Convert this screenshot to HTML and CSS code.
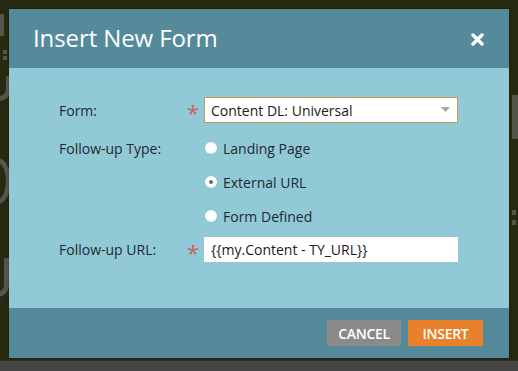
FILE: index.html
```html
<!DOCTYPE html>
<html>
<head>
<meta charset="utf-8">
<link rel="stylesheet" href="styles.css">
</head>
<body>
<div class="page">
  <div class="backdrop">
    <div class="frag frag-a"></div>
    <div class="frag frag-b"></div>
    <div class="frag frag-c"></div>
    <div class="frag frag-d"></div>
    <div class="frag frag-e"></div>
    <div class="frag frag-f"></div>
    <div class="frag frag-g"></div>
  </div>
  <div class="bottom-strip"></div>
</div>
<div class="dialog">
  <div class="dialog-header">
    <h1 class="title">Insert New Form</h1>
    <svg class="close" width="13" height="13" viewBox="0 0 13 13"><path d="M2 2 L11 11 M11 2 L2 11" stroke="#fff" stroke-width="3.4" stroke-linecap="round"/></svg>
  </div>
  <div class="dialog-body">
    <div class="row row-select">
      <span class="label">Form:</span>
      <span class="req">*</span>
      <div class="select">
        <span>Content DL: Universal</span>
        <svg width="9" height="5" viewBox="0 0 9 5"><path d="M0 0 H9 L4.5 5 Z" fill="#a8a8a8"/></svg>
      </div>
    </div>
    <div class="row row-radio">
      <span class="label">Follow-up Type:</span>
      <span class="req"></span>
      <label class="radio"><span class="dot"></span>Landing Page</label>
    </div>
    <div class="row row-radio">
      <span class="label"></span>
      <span class="req"></span>
      <label class="radio"><span class="dot checked"></span>External URL</label>
    </div>
    <div class="row row-radio">
      <span class="label"></span>
      <span class="req"></span>
      <label class="radio"><span class="dot"></span>Form Defined</label>
    </div>
    <div class="row row-input">
      <span class="label">Follow-up URL:</span>
      <span class="req">*</span>
      <div class="input">{{my.Content - TY_URL}}</div>
    </div>
  </div>
  <div class="dialog-footer">
    <button class="btn btn-cancel">CANCEL</button>
    <button class="btn btn-insert">INSERT</button>
  </div>
</div>
</body>
</html>
```

FILE: styles.css
```css
html, body {
  margin: 0;
  padding: 0;
}
body {
  width: 518px;
  height: 371px;
  overflow: hidden;
  background: #262a10;
  font-family: "Open Sans", "Liberation Sans", sans-serif;
}
.page {
  height: 371px;
  display: flex;
  flex-direction: column;
}
.backdrop {
  flex: 1;
  position: relative;
  overflow: hidden;
}
.frag {
  position: absolute;
  background: #55554b;
}
.frag-a { left: 0; top: 14px; width: 4px; height: 22px; }
.frag-b { left: 3px; top: 50px; width: 4px; height: 4px; box-shadow: 0 6px 0 #55554b; }
.frag-c { left: -14px; top: 76px; width: 20px; height: 20px; background: transparent; border: 5px solid #55554b; border-radius: 0 0 12px 0; border-left: none; border-top: none; }
.frag-d { left: -16px; top: 158px; width: 22px; height: 36px; background: transparent; border: 5px solid #55554b; border-radius: 50%; border-left: none; }
.frag-e { left: -16px; top: 258px; width: 20px; height: 34px; background: transparent; border: 5px solid #55554b; border-radius: 0 0 12px 0; border-left: none; border-top: none; }
.frag-f { left: 512px; top: 95px; width: 8px; height: 44px; }
.frag-g { left: 512px; top: 210px; width: 4px; height: 5px; box-shadow: 0 10px 0 #55554b; }
.bottom-strip {
  height: 10px;
  background: #454545;
  border-top: 1px solid #2e2e22;
}
.dialog {
  position: absolute;
  left: 9px;
  top: 9px;
  width: 500px;
  display: flex;
  flex-direction: column;
  box-shadow: 0 0 2px rgba(0,0,0,0.4);
}
.dialog-header {
  height: 59px;
  background: #558a9b;
  display: flex;
  align-items: center;
  justify-content: space-between;
  padding: 0 25px 0 24px;
  box-sizing: border-box;
}
.title {
  margin: 0;
  font-size: 24px;
  font-weight: 400;
  color: #fff;
  letter-spacing: -0.1px;
  position: relative;
  top: -1px;
}
.close {
  position: relative;
  top: 1px;
}
.dialog-body {
  height: 240px;
  background: #92c9d6;
  box-sizing: border-box;
  padding: 29px 0 0 50px;
  display: flex;
  flex-direction: column;
}
.row {
  display: flex;
  align-items: center;
}
.row-select { height: 26px; margin-bottom: 8px; }
.row-radio { height: 34px; }
.row-input { height: 25px; margin-top: 4px; }
.label {
  width: 128px;
  font-size: 14px;
  color: #1d2a30;
}
.req {
  width: 17px;
  color: #c8605c;
  font-size: 22px;
  line-height: 1;
  position: relative;
  top: 2px;
}
.select {
  width: 254px;
  height: 26px;
  box-sizing: border-box;
  background: #fff;
  border: 1px solid #c49a5a;
  display: flex;
  align-items: center;
  justify-content: space-between;
  padding: 0 7px 0 6px;
  font-size: 14px;
  color: #1a1a1a;
}
.select svg { position: relative; top: -1px; }
.radio {
  display: flex;
  align-items: center;
  font-size: 14px;
  color: #1d2a30;
  position: relative;
  left: 1px;
}
.dot {
  width: 12px;
  height: 12px;
  border-radius: 50%;
  background: radial-gradient(circle at 50% 35%, #ffffff 55%, #e4e8ea 100%);
  box-shadow: 0 0 1px rgba(0,0,0,0.25);
  margin-right: 6px;
  display: flex;
  align-items: center;
  justify-content: center;
}
.dot.checked::after {
  content: "";
  width: 4px;
  height: 4px;
  border-radius: 50%;
  background: #6a6a6a;
}
.input {
  width: 254px;
  height: 25px;
  box-sizing: border-box;
  background: #fff;
  padding: 0 7px;
  font-size: 14px;
  line-height: 25px;
  color: #1a1a1a;
}
.dialog-footer {
  height: 50px;
  background: #558a9b;
  display: flex;
  align-items: center;
  justify-content: flex-end;
  gap: 7px;
  padding-right: 26px;
}
.btn {
  border: none;
  height: 26px;
  width: 74px;
  padding: 0;
  font-family: "Open Sans", "Liberation Sans", sans-serif;
  font-size: 14px;
  font-weight: 600;
  color: #fff;
  letter-spacing: -0.3px;
}
.btn-cancel { background: #8a8a8a; }
.btn-insert { background: #e8812a; width: 75px; }
```
